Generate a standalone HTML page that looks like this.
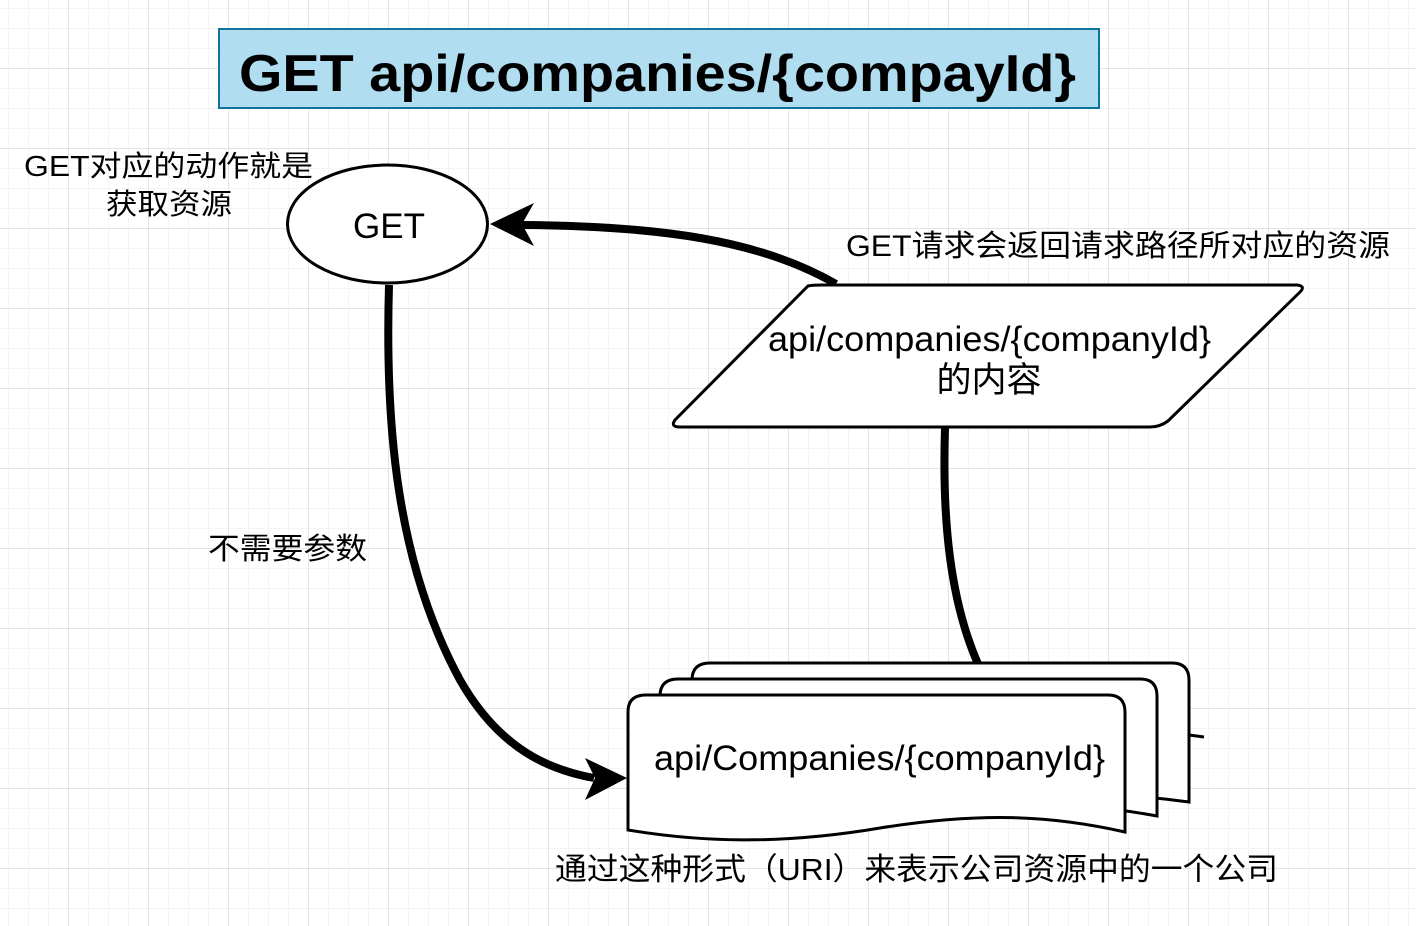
<!DOCTYPE html>
<html><head><meta charset="utf-8"><style>
html,body{margin:0;padding:0;background:#fff}
svg{display:block}
text{font-family:"Liberation Sans","Noto Sans CJK SC",sans-serif;fill:#000}
</style></head><body>
<svg width="1416" height="926" viewBox="0 0 1416 926" xmlns="http://www.w3.org/2000/svg">
<defs>
<pattern id="minor" x="8" y="8" width="20" height="20" patternUnits="userSpaceOnUse">
<path d="M0 0H20M0 0V20" stroke="#f1f1f1" stroke-width="1.5" fill="none"/></pattern>
<pattern id="major" x="68" y="68" width="80" height="80" patternUnits="userSpaceOnUse">
<path d="M0 0H80M0 0V80" stroke="#dedede" stroke-width="1.5" fill="none"/></pattern>
</defs>
<rect width="1416" height="926" fill="url(#minor)"/>
<rect width="1416" height="926" fill="url(#major)"/>

<rect x="219" y="29" width="880" height="79" fill="#b1ddf0" stroke="#10739e" stroke-width="2"/>
<text x="239" y="91" font-size="52" font-weight="bold" textLength="837" lengthAdjust="spacingAndGlyphs">GET api/companies/{compayId}</text>

<text x="24" y="176" font-size="29" textLength="289" lengthAdjust="spacingAndGlyphs">GET对应的动作就是</text>
<text x="106" y="214" font-size="29" textLength="126" lengthAdjust="spacingAndGlyphs">获取资源</text>

<ellipse cx="387.5" cy="224" rx="100" ry="59" fill="#fff" stroke="#000" stroke-width="3"/>
<text x="353" y="238" font-size="35" textLength="72" lengthAdjust="spacingAndGlyphs">GET</text>

<text x="846" y="256" font-size="30" textLength="544" lengthAdjust="spacingAndGlyphs">GET请求会返回请求路径所对应的资源</text>

<path d="M836 284 C760 240 660 226 522 225" fill="none" stroke="#000" stroke-width="8"/>
<path d="M490 224 L534 203 L522 224 L534 246 Z" fill="#000"/>

<path d="M808 286 Q812 285 822 285 L1297 285 Q1306 286 1300 292 L1168 421 Q1160 427 1150 427 L680 427 Q670 427 675 420 L802 292 Z" fill="#fff" stroke="#000" stroke-width="3"/>
<text x="768" y="351" font-size="35" textLength="443" lengthAdjust="spacingAndGlyphs">api/companies/{companyId}</text>
<text x="989" y="392" font-size="35" text-anchor="middle">的内容</text>

<path d="M945 428 C942 520 950 600 978 664" fill="none" stroke="#000" stroke-width="8"/>

<path d="M389 285 C385 420 395 560 460 680 C500 750 550 770 594 778" fill="none" stroke="#000" stroke-width="8"/>
<path d="M627 778 L585 758 L595 778 L585 800 Z" fill="#000"/>

<text x="208" y="559" font-size="30" textLength="159" lengthAdjust="spacingAndGlyphs">不需要参数</text>

<!-- documents -->
<path d="M1189 735 L1204 737" stroke="#000" stroke-width="3"/>
<path d="M692 680 Q692 663 710 663 L1172 663 Q1189 663 1189 680 L1189 802 C1100 790 1000 790 900 800 C820 808 750 806 692 798 Z" fill="#fff" stroke="#000" stroke-width="3"/>
<path d="M660 696 Q660 679 678 679 L1140 679 Q1157 679 1157 696 L1157 816 C1070 800 990 800 880 814 C790 824 720 822 660 814 Z" fill="#fff" stroke="#000" stroke-width="3"/>
<path d="M628 712 Q628 695 646 695 L1108 695 Q1125 695 1125 712 L1125 832 C1050 815 980 812 880 828 C780 845 700 842 628 830 Z" fill="#fff" stroke="#000" stroke-width="3"/>
<text x="654" y="770" font-size="35" textLength="451" lengthAdjust="spacingAndGlyphs">api/Companies/{companyId}</text>

<text x="555" y="880" font-size="31" textLength="723" lengthAdjust="spacingAndGlyphs">通过这种形式（URI）来表示公司资源中的一个公司</text>
</svg>
</body></html>
